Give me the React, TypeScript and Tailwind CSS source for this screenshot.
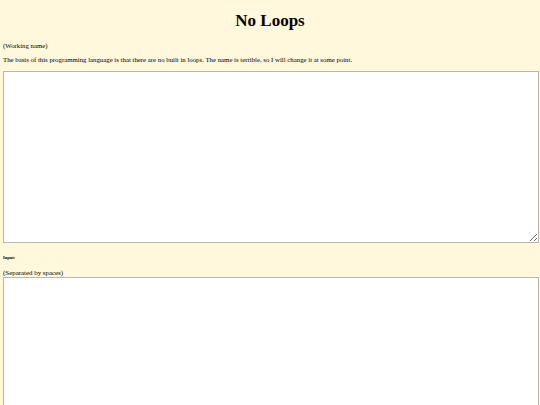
export default function App() {
  return (
    <div className="min-h-screen bg-[#fff8dc] px-[3px] pb-4 text-black font-['Liberation_Serif',serif]">
      <h1 className="pt-[11px] text-center text-[17px] font-bold leading-[20px]">No Loops</h1>

      <p className="mt-[11px] text-[6.8px] leading-[8px]">(Working name)</p>
      <p className="mt-[6px] text-[6.8px] leading-[8px]">
        The basis of this programming language is that there are no built in loops. The name is terrible, so I will change it at some point.
      </p>

      <textarea className="mt-[7px] block h-[172px] w-[536px] border border-[#b9b6ae] bg-white" />

      <h6 className="mt-[12px] text-[4.5px] font-bold leading-[6px]">Input:</h6>
      <p className="mt-[8px] text-[6.9px] leading-[8px]">(Separated by spaces)</p>
      <textarea className="block h-[172px] w-[536px] border border-[#b9b6ae] bg-white" />
    </div>
  );
}
